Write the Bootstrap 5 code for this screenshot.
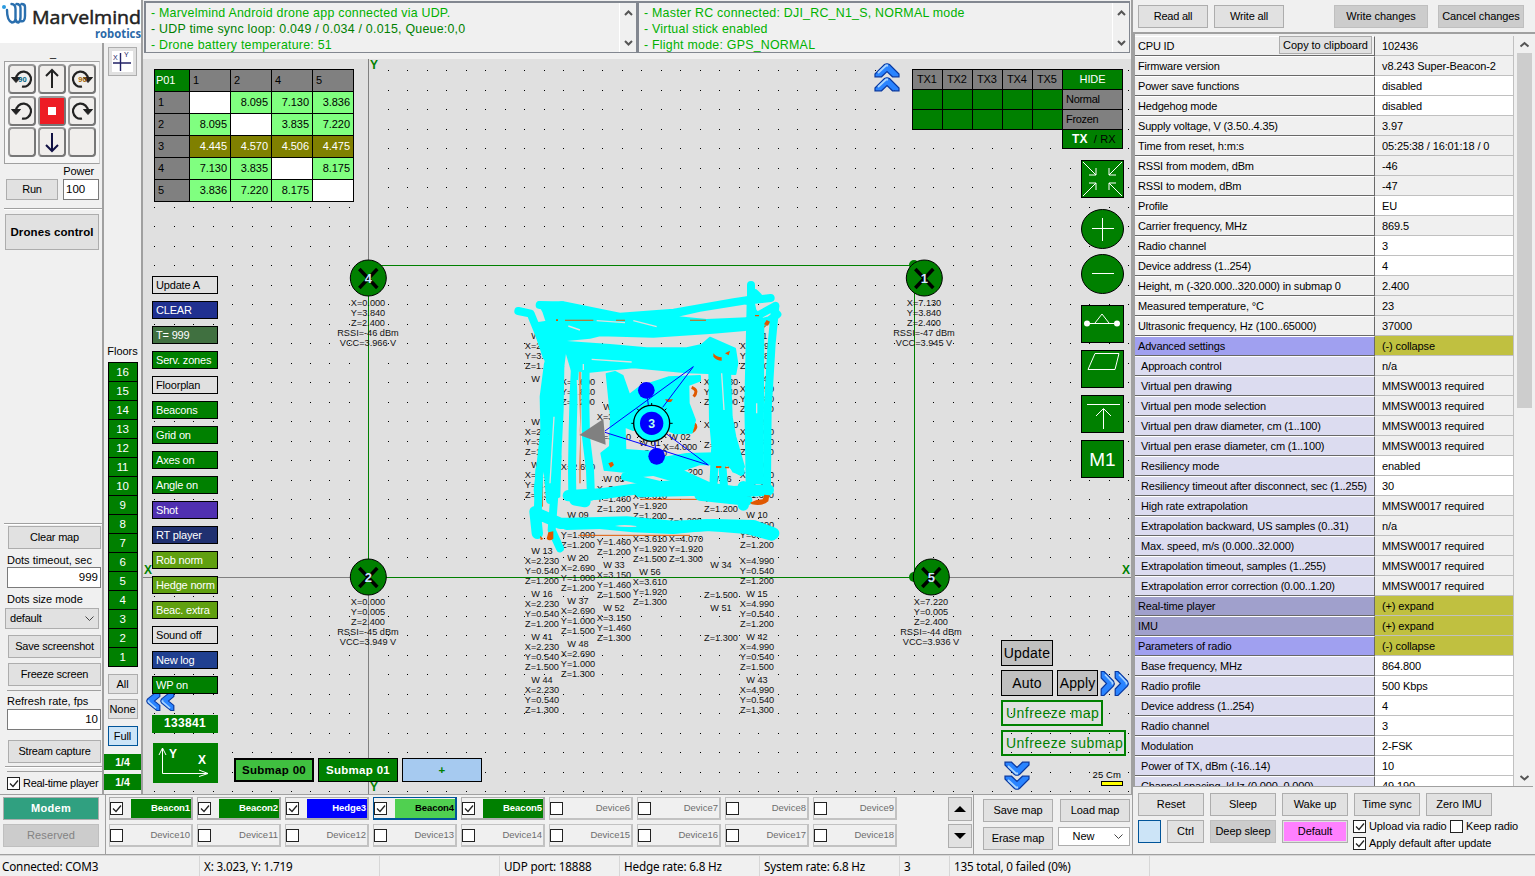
<!DOCTYPE html>
<html lang="en">
<head>
<meta charset="utf-8">
<title>Marvelmind Dashboard</title>
<link rel="stylesheet" href="https://cdn.jsdelivr.net/npm/bootstrap@5.3.0/dist/css/bootstrap.min.css">
<style>
:root{--face:#f0f0f0;--btn:#e1e1e1;--edge:#adadad;--split:#a0a0a0;--green:#008000}
body{font:11px/13px "Liberation Sans",Arial,sans-serif;color:#000;background:var(--face);width:1535px;height:876px;overflow:hidden;white-space:nowrap}
.wbtn{background:var(--btn);border:1px solid var(--edge);color:#000;font-size:11px;line-height:13px;padding:0;border-radius:0;display:flex;align-items:center;justify-content:center;letter-spacing:-.05px}
.panelA .wbtn{letter-spacing:-.22px}
.wbtn.dim{background:#ccc;border-color:#bfbfbf}
.h22{height:23px}
.field{background:#fff;border:1px solid #7a7a7a;height:21px;line-height:18px;font-size:11.5px;padding:0 2px}
.leftcol{width:143px;border-right:2px solid var(--split)}
.brand{height:43px;background:#fff}
.panelA{width:104px;border-right:2px solid var(--split)}
.pad9{width:96px;height:103px;border:1px solid var(--split);border-right-color:#ccc;padding:2px 3px;display:grid;grid-template-columns:repeat(3,28px);grid-template-rows:repeat(3,30px);gap:1.5px 2px;background:#f6f6f6}
.key{border:2px solid #777;border-top-color:#999;border-left-color:#999;border-radius:4px;background:#f0eeec}
.key svg{display:block;width:100%;height:100%}
.hr2{height:2px;background:var(--split);border-bottom:1px solid #fff}
.floors div{height:19px;background:var(--green);border:1px solid #000;border-bottom:0;color:#fff;font-size:11.5px;line-height:18px;text-align:center;letter-spacing:-.2px}
.floors{border-bottom:1px solid #000;width:30px}
.frac{height:16px;background:var(--green);color:#fff;font-weight:bold;text-align:center;line-height:16px;font-size:10.5px}
.log{height:52px;border:1px solid #828790;border-width:2px 1px 1px 2px;background:var(--face);font-size:12.4px;line-height:16px;color:#00b000;overflow:hidden;padding:1.5px 0 0 5px;letter-spacing:.24px;position:relative}
.log .bar{position:absolute;right:0;top:0;width:17px;height:49px;border-left:1px solid #fff}
.mapbox{height:735px;background:#e0e0e0;overflow:hidden}
.mapbox>svg{position:absolute;left:0;top:0}
.over{position:absolute}
.dist{border-collapse:collapse;table-layout:fixed;width:200px}
.dist td{border:1px solid #000;height:22px;padding:0 3px 2px 0;background:#80ff80;text-align:right;width:41px;line-height:16px;letter-spacing:-.05px}
.dist tr td:first-child{width:35px}
.dist td.hd{background:#808080;text-align:left;padding-left:3px}
.dist td.wh{background:#fff}.dist td.ol{background:#808000;color:#fff}
.dist td.p{background:var(--green);color:#fff;padding-left:1px}
.tool{width:66px;height:18px;border:1px solid #000;line-height:16px;padding-left:3px;color:#fff;background:var(--green);letter-spacing:-.18px}
.tool.plain{background:#e0e0e0;color:#000}
.tools{display:grid;gap:7px}
.tx{display:grid;grid-template-columns:repeat(5,30px) 60px;border-left:1px solid #000;border-top:1px solid #000}
.tx div{height:20px;border-right:1px solid #000;border-bottom:1px solid #000;background:var(--green);line-height:19px;padding-left:4px;letter-spacing:-.1px}
.tx .g{background:#808080}
.sq{width:43px;height:38px;display:block;background:var(--green);border:1px solid #000}
.cbtn{background:#c0c0c0;border:1px solid #000;height:26px;font-size:14px;line-height:24px;text-align:center;letter-spacing:.2px}
.gbtn{border:2px solid var(--green);color:var(--green);height:26px;font-size:14px;line-height:22px;padding-left:3px;letter-spacing:.45px}
.sub{width:80px;height:24px;border:1px solid #000;background:var(--green);color:#fff;font-weight:bold;font-size:11.5px;text-align:center;line-height:22px;letter-spacing:.3px}
.dev{width:84px;height:23px;border:1px solid #c2c2c2;border-right-width:2px;border-bottom-width:2px;background:var(--face);color:#6d6d6d;display:flex;align-items:center;font-size:9.5px}
.dev .nm{flex:1;text-align:right;height:19px;line-height:18px;padding-right:1px;letter-spacing:0}
.dev.on{border-color:var(--edge)}
.dev.on .nm{font-weight:bold;color:#fff;font-size:9.5px;letter-spacing:-.1px}
.cb{width:13px;height:13px;border:1px solid #222;background:#fff;flex:none;display:block}
.devs{display:grid;grid-template-columns:repeat(9,84px);gap:4px}
.status{height:21px;border-top:1px solid #d7d7d7;font:11.7px/20px "Noto Sans","Open Sans",sans-serif;letter-spacing:-.18px}
.status div{border-right:1px solid #d7d7d7;padding-left:4px;height:21px}
.props{height:750px;overflow:hidden;background:#fff;flex:none}
.pr{display:flex;height:20px}
.pr .k{width:240px;border-right:1px solid #696969;border-bottom:1px solid #696969;border-top:1px solid #fff;background:var(--face);padding-left:3px;line-height:18px;letter-spacing:-.17px}
.pr .v{width:139px;border-bottom:1px solid #c0c0c0;border-right:1px solid #c0c0c0;padding-left:7px;line-height:20px;letter-spacing:-.12px}
.sbar{width:16px;background:#f0f0f0;margin-left:3px}
svg text{font-family:"Liberation Sans",Arial,sans-serif}
</style>
</head>
<body>
<div class="d-flex" style="height:855px">
 <div class="d-flex flex-column" style="width:1132px">
  <div class="d-flex" style="height:794px">
   <div class="leftcol d-flex flex-column">
    <div class="brand"><svg width="141" height="43">
      <g fill="none" stroke="#2a6fae" stroke-width="2.400" stroke-linecap="round"><path d="M7 10Q7 21 12 22.500Q15.500 22.500 15.500 18V9Q15.500 4 11.500 4M15.500 19Q16 22.500 18.500 22.500Q20.500 21 20.500 17V8Q20.500 4 16.500 4M20.500 21Q25 22.500 25 16V7Q25 4 21.500 4"/></g><circle cx="4" cy="7" r="2" fill="#2b9be0"/>
      <text x="32" y="24" font-size="19" textLength="109" lengthAdjust="spacingAndGlyphs" stroke="#222" stroke-width=".5" fill="#222" style="font-family:'Open Sans'">Marvelmind</text>
      <text x="95" y="37.500" font-size="12.500" textLength="46" lengthAdjust="spacingAndGlyphs" font-weight="bold" fill="#2a69a8" style="font-family:'Open Sans'">robotics</text></svg></div>
    <div class="d-flex flex-fill">
     <div class="panelA ps-1 d-flex flex-column">
      <div class="text-center" style="height:18px;line-height:20px">_</div>
      <div class="pad9" id="pad"></div>
      <div class="text-end pe-2" style="height:15px;line-height:15px;letter-spacing:-.1px">Power</div>
      <div class="d-flex justify-content-between ps-1 pe-1"><div class="wbtn" style="width:52px;height:21px;margin-left:-2px">Run</div><div class="field" style="width:36px;margin-right:-1px">100</div></div>
      <div class="hr2 mt-2 ms-n1"></div>
      <div class="wbtn fw-bold mt-1" style="width:94px;height:36px;margin-left:1px;font-size:11.500px;letter-spacing:.1px">Drones control</div>
      <div class="flex-fill"></div>
      <div class="hr2"></div>
      <div class="d-flex flex-column" style="padding:1px 1px 0 4px;height:246px">
       <div class="wbtn h22">Clear map</div>
       <div style="margin-top:5px;margin-left:-1px">Dots timeout, sec</div>
       <div class="field text-end" style="margin-left:-1px">999</div>
       <div style="margin-top:5px;margin-left:-1px">Dots size mode</div>
       <div class="wbtn d-flex justify-content-between px-1" style="height:21px;width:94px;margin:2px 0 6px -3px"><span>default</span><svg width="9" height="6"><path d="M.5 .5l4 4 4-4" fill="none" stroke="#444"/></svg></div>
       <div class="wbtn h22">Save screenshot</div>
       <div class="wbtn h22" style="margin-top:5px">Freeze screen</div>
       <div style="margin-top:4px;margin-left:-1px;border-top:1px solid #a0a0a0;padding-top:4px">Refresh rate, fps</div>
       <div class="field text-end" style="margin-top:1px;margin-left:-1px">10</div>
       <div class="wbtn h22" style="margin-top:10px">Stream capture</div>
       <div class="hr2" style="margin:3px -1px 0 -3px"></div>
      </div>
      <div class="d-flex align-items-center" style="height:23px;margin-left:3px;border-top:1px solid #a0a0a0"><svg class="cb"><path d="M2 5.500l3 3 5-6" fill="none" stroke="#222" stroke-width="1.300"/></svg><span style="margin-left:3px;letter-spacing:-.3px">Real-time player</span></div>
     </div>
     <div class="flex-fill d-flex flex-column align-items-center">
      <div class="wbtn" style="width:29px;height:29px;margin-top:4px"><svg width="21" height="21"><rect width="21" height="21" fill="#fff"/><path d="M1 12h18M8.500 2v18" stroke="#226" stroke-width="1.400"/><text x="1" y="9" font-size="7" fill="#226">X</text><text x="12" y="6" font-size="7" fill="#226">Y</text></svg></div>
      <div class="flex-fill"></div>
      <div style="height:17px">Floors</div>
      <div class="floors" id="floors"></div>
      <div class="wbtn" style="width:30px;height:20px;margin-top:7px">All</div>
      <div class="wbtn" style="width:30px;height:20px;margin-top:5px">None</div>
      <div class="wbtn" style="width:30px;height:20px;margin-top:7px;background:#cce4f7;border-color:#005499">Full</div>
      <div class="frac w-100" style="margin-top:8px">1/4</div>
      <div class="frac w-100" style="margin:4px 0 4px">1/4</div>
     </div>
    </div>
   </div>
   <div style="width:989px;border-right:1px solid #a0a0a0">
    <div class="d-flex" style="height:59px;padding:1px 1px 0 1px">
     <div class="log" style="width:493px">- Marvelmind Android drone app connected via UDP.<br><span style="color:#008000">- UDP time sync loop: 0.049 / 0.034 / 0.015, Queue:0,0</span><br>- Drone battery temperature: 51<div class="bar"><svg width="16" height="49" fill="none" stroke="#555" stroke-width="2"><path d="M5 12l3.500-3.500L12 12M5 38l3.500 3.500L12 38"/></svg></div></div>
     <div class="log" style="width:493px">- Master RC connected: DJI_RC_N1_S, NORMAL mode<br>- Virtual stick enabled<br>- Flight mode: GPS_NORMAL<div class="bar"><svg width="16" height="49" fill="none" stroke="#555" stroke-width="2"><path d="M5 12l3.500-3.500L12 12M5 38l3.500 3.500L12 38"/></svg></div></div>
    </div>
    <div class="mapbox position-relative">
     <svg width="989" height="735" viewBox="143 59 989 735" id="map">
      <g id="dots" shape-rendering="crispEdges"></g>
      <g shape-rendering="crispEdges" fill="none"><path d="M368.500 59V794M143 577.500H1132" stroke="#808080"/><path d="M368.500 278V577.500H914.500V265.500H368" stroke="#008000"/></g>
      <g fill="#008000"><circle cx="914" cy="265" r="5"/><circle cx="914" cy="577" r="5"/></g>
      <g id="labels" font-size="9.200" text-anchor="middle" fill="#111"></g>
      <g transform="translate(500 270) scale(.33333)" id="paint">
       <g fill="#e05800"><path d="M113 155l20 8v40z"/></g>
       <g fill="none" stroke="#e05800" stroke-width="3"><path d="M772 195V390M127 590V710M420 688H690M235 796H570M240 285V640M650 505V640"/><path stroke-width="9" d="M575 352q22 8 6 28M583 462q12 10-8 24M790 170l12-12"/></g>
       <g fill="#0ff" stroke="#0ff" stroke-width="6" stroke-linejoin="round">
        <path d="M115 97L190 97L360 131L520 119L700 88L740 82V100L600 122L520 140L620 150L740 145L735 180L640 188L460 200L300 196L270 203L200 210L190 290H138L130 200L110 160L140 155L130 125z"/>
        <path d="M135 280L190 290L188 420L182 540L178 680L150 690L148 440L130 600L108 690L104 660L124 480L122 380z"/>
        <path d="M190 215L330 225L440 235L560 235L605 225L630 203L705 236L712 280L706 312L560 307L400 292L270 305L215 300z"/>
        <path d="M320 312L345 306L368 318L388 375L420 350L505 322L600 318L600 332L565 345L566 400L585 450L575 488L525 490L470 465L400 480L374 470L376 540L372 600L314 600L304 550L330 530L333 440z"/>
        <path d="M628 300H690L695 440L706 500L732 590L720 612L700 605L676 560L640 562L630 450z"/>
        <path d="M376 540L450 545L500 562L560 552L700 548L726 575L690 585L600 582L545 602L400 608L320 600z"/>
        <path d="M743 100H762L766 120L790 150L788 640H740L736 400z"/>
       </g>
       <g fill="none" stroke="#0ff" stroke-linecap="round" stroke-linejoin="round">
        <g stroke-width="24">
        <path d="M55 123L92 131L118 195L140 260M119 105L200 112M740 92L812 84M740 155L826 108M740 170L810 150L832 133M753 45V640M765 70L775 80M826 108L815 220L803 420L801 640M185 106V200"/>
        <path d="M118 600L114 710L110 790M172 560L162 690L155 780L180 835M135 500L150 690"/>
        <path d="M225 290L221 370L218 480L216 600L217 680M257 285L256 400L258 500L270 600L273 680"/>
        <path d="M395 612L520 600L630 650M440 600L580 640M645 540L640 650M665 560L672 650M690 580L722 605M375 620L500 650"/></g>
        <g stroke-width="34"><path d="M205 677L300 672L420 655L560 645L700 665L805 660M225 690L255 695M420 665L600 660M600 675L740 690M730 650V705M105 725L112 790M110 730L180 760L300 760L400 770L520 775L620 765L740 775L815 795"/><path stroke-width="36" d="M200 762L380 757L520 770L640 765L760 768L820 790"/></g>
       </g>
       <g fill="none" stroke="#e0e0e0" stroke-width="4"><path d="M290 152L375 158M400 152L470 170M250 282V300M162 440L150 640M232 330L240 480L232 640M275 268L395 276M665 310L672 420M770 400V430M240 180L205 168"/></g>
       <g fill="#e05800"><path d="M640 250q10 12 25 12v10q-15 0-25-12zM675 250l15-8-4 14zM800 150l10 5-6 12-12-4zM325 580l12-5 5 10-10 8zM195 149.500h85v3h-85zM348 149.500h27v3h-27zM570 149.500h48v3h-48zM750 698q20-10 38-10l5-14 15 2-3 18q-15 15-50 9zM145 787l15-3v22q-12 10-20 0zM120 797l10 10-8 3zM765 135h12v4h-12zM495 388h24l-6 8h-12zM648 588h16v6h-16zM675 590h12v5h-12zM168 148h6v5h-6z"/></g>
       <path d="M345 768q25-6 64 0v2q-40 2-64-2z" fill="#ddd"/>
       <path d="M238 495L310 447L317 524z" fill="#808080"/>
       <g fill="none" stroke="#00f" stroke-width="3"><path d="M580 290L315 483M580 290L488 412M315 487L625 585M500 492L625 585M439 361L445 405M470 559L464 515"/></g>
       <path d="M455 399v13M455 508v13M394 460h12M504 460h14M411 416l9 9M499 416l-9 9M411 504l9-9M499 504l-9-9" stroke="#000" stroke-width="3"/>
       <circle cx="455" cy="460" r="54" fill="#0ff" stroke="#000" stroke-width="4"/>
       <g fill="#00f"><circle cx="455" cy="460" r="35"/><circle cx="439" cy="361" r="25"/><circle cx="470" cy="559" r="25"/></g>
       <text x="455" y="473" font-size="37" font-weight="bold" text-anchor="middle" fill="#bfe">3</text>
      </g>
      <g id="nodes"></g>
      <g font-size="12" font-weight="bold" fill="#008000"><text x="370" y="69">Y</text><text x="370" y="791">Y</text><text x="144" y="574">X</text><text x="1122" y="574">X</text></g>
      <defs><g id="chev"><path d="M-12 3.500L-2.500-6Q0-7.500 2.500-6L12 3.500V6.300H5.500L0 1L-5.500 6.300H-12z" fill="#2a84ff" stroke="#0838a0" stroke-width="1.200"/><path d="M-9 2.500L-1-5L1-5" stroke="#a8d4ff" stroke-width="1.800" fill="none"/></g></defs>
      <g><use href="#chev" x="887" y="70.500"/><use href="#chev" x="887" y="84.500"/>
      <use href="#chev" transform="translate(1017 768.500) scale(1 -1)"/><use href="#chev" transform="translate(1017 782.500) scale(1 -1)"/>
      <use href="#chev" transform="translate(1107.500 683.500) rotate(90)"/><use href="#chev" transform="translate(1121.500 683.500) rotate(90)"/>
      <use href="#chev" transform="translate(153.500 701) rotate(-90) scale(.8 1)"/><use href="#chev" transform="translate(167.500 701) rotate(-90) scale(.8 1)"/></g>
      <text x="1092.500" y="778" font-size="9.500" letter-spacing=".1">25 Cm</text><rect x="1101.500" y="781.500" width="21" height="4" fill="#ff0" stroke="#000"/>
     </svg>
     <table class="dist over" style="left:11px;top:10px" id="dist"></table>
     <div class="tools over" style="left:9px;top:217px" id="tools"></div>
     <div class="over text-white fw-bold text-center" style="left:9px;top:656px;width:66px;height:18px;background:#008000;font:bold 12px/17px 'Liberation Sans';letter-spacing:.3px">133841</div>
     <svg class="over" style="left:10px;top:684px" width="65" height="40"><rect width="65" height="40" fill="#008000"/><path d="M9.500 5V30.500H55M6 12l3.500-7L13 12M46 27l9 3.500-9 3" fill="none" stroke="#fff"/><g fill="#fff" font-weight="bold" font-size="12"><text x="16" y="15">Y</text><text x="45" y="21">X</text></g></svg>
     <div class="over d-flex gap-1" style="left:91px;top:699px"><div class="sub" style="background:#40c040;color:#000;border-width:2px;line-height:21px">Submap 00</div><div class="sub">Submap 01</div><div class="sub" style="background:#a6caf0;color:#008000">+</div></div>
     <div class="tx over" style="left:769px;top:10px"><div class="g">TX1</div><div class="g">TX2</div><div class="g">TX3</div><div class="g">TX4</div><div class="g">TX5</div><div class="text-white text-center p-0">HIDE</div>
      <div></div><div></div><div></div><div></div><div></div><div class="g" style="padding-left:3px;letter-spacing:-.3px">Normal</div><div></div><div></div><div></div><div></div><div></div><div class="g" style="padding-left:3px;letter-spacing:-.3px">Frozen</div></div>
     <div class="over" style="left:919px;top:70px;width:61px;height:20px;background:#008000;border:1px solid #000;padding-left:9px;line-height:18px;letter-spacing:.1px"><b class="text-white" style="font-size:12px">TX</b>&nbsp; / RX</div>
     <div class="over d-grid" style="left:938px;top:101px;row-gap:7px">
      <svg class="sq" style="margin-bottom:5px"><g fill="none" stroke="#fff"><path d="M1 1L14 14M14 7V14H7M40 1L27 14M27 7V14H34M1 35L14 22M7 22H14V29M40 35L27 22M34 22H27V29"/></g></svg>
      <svg class="d-block overflow-visible" width="43" height="38" viewBox="0 0 43 38"><ellipse cx="21.500" cy="19" rx="21" ry="19.500" fill="#008000" stroke="#000"/><path d="M11 18.500H33M21.500 8V31" stroke="#fff"/></svg>
      <svg class="d-block overflow-visible" width="43" height="38" viewBox="0 0 43 38"><ellipse cx="21.500" cy="19" rx="21" ry="19.500" fill="#008000" stroke="#000"/><path d="M11 18.500H33" stroke="#fff"/></svg>
      <svg class="sq" style="margin-top:5px"><path d="M5 17.500H35M13 17L20 8L27 17" fill="none" stroke="#fff"/><circle cx="5" cy="17.500" r="3" fill="#fff"/><circle cx="35" cy="17.500" r="3" fill="#fff"/></svg>
      <svg class="sq"><path d="M13 2.500H37L33 18.500H6z" fill="none" stroke="#fff"/></svg>
      <svg class="sq"><path d="M5 8.500H38M21.500 33V13M14 20l7.500-7.500L29 20" fill="none" stroke="#fff"/></svg>
      <svg class="sq"><text x="20.500" y="25" font-size="19" fill="#fff" text-anchor="middle">M1</text></svg>
     </div>
     <div class="over d-grid gap-1" style="left:858px;top:581px">
      <div class="cbtn" style="width:52px">Update</div>
      <div class="d-flex gap-1"><div class="cbtn" style="width:52px">Auto</div><div class="cbtn" style="width:41px;letter-spacing:.1px">Apply</div></div>
      <div class="gbtn" style="width:102px">Unfreeze map</div><div class="gbtn" style="width:125px">Unfreeze submap</div>
     </div>
    </div>
   </div>
  </div>
  <div class="d-flex" style="height:61px;border-top:1px solid #a0a0a0;border-bottom:1px solid #a0a0a0">
   <div class="d-flex flex-column" style="width:106px;padding:2px 0 0 3px;border-right:1px solid #a0a0a0;gap:4px"><div class="wbtn fw-bold" style="width:96px;height:23px;background:#30a080;color:#fff;letter-spacing:.3px">Modem</div><div class="wbtn dim" style="width:96px;height:23px;color:#838383;letter-spacing:.1px">Reserved</div></div>
   <div class="devs" style="padding:2px 0 0 3px;width:833px;align-content:start" id="devs"></div>
   <div class="d-grid" style="width:35px;gap:3px;padding:2px 0 0 9px;margin-right:6px;border-right:1px solid #a0a0a0;align-content:start"><div class="wbtn" style="height:24px;width:24px"><svg width="12" height="7"><path d="M0 6L6 0L12 6z"/></svg></div><div class="wbtn" style="height:24px;width:24px"><svg width="12" height="7"><path d="M0 0L6 6L12 0z"/></svg></div></div>
   <div style="display:grid;grid-template-columns:70px 70px;gap:5px 7px;padding:4px 0 0 3px;align-content:start"><div class="wbtn h22">Save map</div><div class="wbtn h22">Load map</div><div class="wbtn h22">Erase map</div><div class="wbtn" style="background:#fff;height:19px;margin-left:-2px;gap:20px;padding-left:8px"><span>New</span><svg width="9" height="6"><path d="M.5 .5l4 4 4-4" fill="none" stroke="#444"/></svg></div></div>
  </div>
 </div>
 <div style="width:403px;border-left:1px solid #a0a0a0;border-bottom:1px solid #a0a0a0">
  <div class="d-flex" style="height:34px;padding:5px 0 0 5px;border-bottom:2px solid #a0a0a0"><div class="wbtn h22" style="width:70px;letter-spacing:-.25px">Read all</div><div class="wbtn h22" style="width:70px;margin-left:6px;letter-spacing:-.15px">Write all</div><div class="wbtn h22 dim" style="width:94px;margin-left:50px">Write changes</div><div class="wbtn h22 dim" style="width:86px;margin-left:10px;letter-spacing:-.1px">Cancel changes</div></div>
  <div class="d-flex" style="height:753px;border-left:2px solid #a0a0a0;border-bottom:1px solid #a0a0a0;padding-top:2px;margin-right:2px">
   <div class="props position-relative" id="props"></div>
   <div class="sbar"><svg width="15" height="750" class="d-block"><path d="M0 17H15V372H0z" fill="#cdcdcd"/><path d="M3.500 10.500L7.500 7L11.500 10.500M3.500 740L7.500 743.500L11.500 740" stroke="#555" stroke-width="2" fill="none"/></svg></div>
  </div>
  <div style="padding:6px 0 0 5px;height:66px">
   <div class="d-flex" style="gap:6px"><div class="wbtn h22" style="width:66px">Reset</div><div class="wbtn h22" style="width:66px">Sleep</div><div class="wbtn h22" style="width:66px">Wake up</div><div class="wbtn h22" style="width:66px">Time sync</div><div class="wbtn h22" style="width:66px">Zero IMU</div></div>
   <div class="d-flex" style="gap:6px;margin-top:4px"><div class="wbtn h22" style="width:23px;background:#cce4f7;border-color:#005499"></div><div class="wbtn h22" style="width:37px">Ctrl</div><div class="wbtn h22 dim" style="width:66px">Deep sleep</div><div class="wbtn h22" style="width:66px;background:#ff80ff;box-shadow:inset 0 0 0 1px #e1e1e1">Default</div>
    <div style="margin-left:-1px;letter-spacing:-.12px"><div class="d-flex" style="height:17px;gap:3px"><svg class="cb"><path d="M2 5.500l3 3 5-6" fill="none" stroke="#222" stroke-width="1.300"/></svg><span style="width:78px">Upload via radio</span><span class="cb"></span>Keep radio</div><div class="d-flex" style="gap:3px"><svg class="cb"><path d="M2 5.500l3 3 5-6" fill="none" stroke="#222" stroke-width="1.300"/></svg>Apply default after update</div></div></div>
  </div>
 </div>
</div>
<div class="status d-flex"><div style="width:200px;padding-left:2px">Connected: COM3</div><div style="width:180px">X: 3.023, Y: 1.719</div><div style="width:120px"></div><div style="width:120px">UDP port: 18888</div><div style="width:140px">Hedge rate: 6.8 Hz</div><div style="width:140px">System rate: 6.8 Hz</div><div style="width:50px">3</div><div style="width:200px">135 total, 0 failed (0%)</div></div>
<script src="https://cdn.jsdelivr.net/npm/bootstrap@5.3.0/dist/js/bootstrap.bundle.min.js"></script>
<script>
const $=id=>document.getElementById(id);
// movement pad
const turn=(t,flip)=>`<svg viewBox="0 0 24 26"><g ${flip?'transform="translate(24 0) scale(-1 1)"':''} fill="none" stroke="#222" stroke-width="2.200"><path d="M6 13a7.500 7.500 0 1 1 6 7.500"/><path d="M1.500 11.500l4.500 5 4.500-5z" fill="#222" stroke-width="1"/></g>${t?`<text x="12.500" y="16" font-size="7.500" font-weight="bold" text-anchor="middle" fill="${flip?'#a60':'#068'}">90</text>`:''}</svg>`;
const arr=(d,c)=>`<svg viewBox="0 0 24 26"><path d="${d}" fill="none" stroke="${c}" stroke-width="2"/></svg>`;
$('pad').innerHTML=[turn(1,0),arr('M12 22V4M6 10l6-6 6 6','#222'),turn(1,1),turn(0,0),'<svg viewBox="0 0 24 26"><path d="M0 0H24V26H0z" fill="#ed1c24"/><path d="M8 9h8v8H8z" fill="#fff"/></svg>',turn(0,1),'',arr('M12 4V22M6 16l6 6 6-6','#114'),''].map(s=>`<div class="key">${s}</div>`).join('');
let h='';for(let i=16;i;i--)h+=`<div>${i}</div>`;$('floors').innerHTML=h;
// grid of map points
const ys=[70,90,109,129,148,168,187,207,226,246,265,285,304,324,343,363,382,402,421,441,460,480,499,518,538,557,577,596,616,635,655,674,694,713,733,752,772,791];
const xs=[154,174,193,213,232,252,271,291,310,329,349,368,388,407,427,446,466,485,505,524,544,563,583,602,622,641,661,680,700,719,739,758,778,797,816,836,855,875,894,914,933,953,972,992,1011,1031,1050,1070,1089,1109,1128];
let d='';ys.forEach(y=>xs.forEach(x=>d+=`M${x} ${y}h1v1h-1z`));$('dots').innerHTML=`<path d="${d}"/>`;
// waypoint captions: centre x, centre y of first line, lines
const W=(n,x,y,z)=>['W '+n,'X='+x,'Y='+y,'Z='+z];
const L=[[542,335.500,W('12','2.230','3.300','1.200')],[542,378.500,['W 17']],[542,421.700,W('08','2.230','3.300','1.500')],[542,464.700,W('25','2.230','3.300','1.300')],[542,550.700,W('13','2.230','0.540','1.200')],[542,593.700,W('16','2.230','0.540','1.200')],[542,636.700,W('41','2.230','0.540','1.500')],[542,679.700,W('44','2.230','0.540','1.300')],
[578,372,['','X=2.690','Y=2.840','Z=1.200']],[578,457,['','X=2.690']],[578,514.700,W('09','2.690','1.000','1.200')],[578,557.700,W('20','2.690','1.000','1.200')],[578,600.700,W('37','2.690','1.000','1.500')],[578,643.700,W('48','2.690','1.000','1.300')],
[614,406.500,['W 04','X=3.150']],[614,478.500,W('05','3.150','1.460','1.200')],[614,521.700,['','','Y=1.460','Z=1.200']],[614,564.700,W('33','3.150','1.460','1.500')],[614,607.700,W('52','3.150','1.460','1.300')],
[614,437,['X=3.610']],[650,443,W('01','3.610','1.920','1.200')],[650,486,['','X=3.610','Y=1.920','Z=1.200']],[650,529,['','X=3.610','Y=1.920','Z=1.500']],[650,571.700,W('56','3.610','1.920','1.300')],
[680,437,['W 02','X=4.000']],[686,472,['Z=1.200']],[685,521,['Z=1.200']],[686,529,['','X=4.070','Y=1.920','Z=1.300']],
[721,372,['','X=4.530','Y=2.840','Z=1.200']],[721,415,['','X=4.530','','Z=1.500']],[721,478.500,['W 06','','Y=1.460','Z=1.200']],[721,565,['W 34','','','Z=1.500']],[721,608,['W 51','','','Z=1.300']],
[757,335.500,W('11','4.990','3.380','1.200')],[757,378.500,W('14','4.990','3.380','1.200')],[757,421.700,W('39','4.990','3.380','1.500')],[757,464.700,W('46','4.990','3.380','1.300')],[757,514.700,W('10','4.990','0.540','1.200')],[757,550.700,['','X=4.990','Y=0.540','Z=1.200']],[757,593.700,W('15','4.990','0.540','1.200')],[757,636.700,W('42','4.990','0.540','1.500')],[757,679.700,W('43','4.990','0.540','1.300')]];
const B=[[368,278,4,'0.000','3.840','46','3.966'],[924,278,1,'7.130','3.840','47','3.945'],[368,577,2,'0.000','0.005','45','3.949'],[931,577,5,'7.220','0.005','44','3.936']];
B.forEach(b=>L.push([b[0],b[1]+25,['X='+b[3],'Y='+b[4],'Z=2.400',`RSSI=-${b[5]} dBm`,`VCC=${b[6]} V`]]));
$('labels').innerHTML=L.map(([x,y,t])=>t.map((s,i)=>s?`<text x="${x}" y="${y+3.3+i*10}">${s}</text>`:'').join('')).join('');
$('nodes').innerHTML=B.map(b=>`<g transform="translate(${b[0]+.3} ${b[1]})"><circle r="18" fill="#008000" stroke="#000"/><path d="M-9-9L9 10M9-9L-9 10" stroke="#000" stroke-width="3.500"/><text y="5" font-size="13" font-weight="bold" text-anchor="middle" fill="#cfe8ff">${b[2]}</text></g>`).join('');
// distance table
const T=[['P01',1,2,4,5],[1,'','8.095','7.130','3.836'],[2,'8.095','','3.835','7.220'],[3,'4.445','4.570','4.506','4.475'],[4,'7.130','3.835','','8.175'],[5,'3.836','7.220','8.175','']];
$('dist').innerHTML=T.map((r,i)=>'<tr>'+r.map((c,j)=>`<td class="${!i&&!j?'p text-start':!i||!j?'hd':c===''?'wh':i==3?'ol':''}">${c}</td>`).join('')+'</tr>').join('');
$('tools').innerHTML=[['Update A'],['CLEAR','#203090'],['T= 999','#407040'],['Serv. zones','#008000'],['Floorplan'],['Beacons','#008000'],['Grid on','#008000'],['Axes on','#008000'],['Angle on','#008000'],['Shot','#5030b0'],['RT player','#203070'],['Rob norm','#60a010'],['Hedge norm','#60a010'],['Beac. extra','#60a010'],['Sound off'],['New log','#204090'],['WP on','#008000']].map(([t,c])=>`<div class="tool ${c?'':'plain'}" ${c?`style="background:${c}"`:''}>${t}</div>`).join('');
// devices
h='';const on={1:['Beacon1','#008000'],2:['Beacon2','#008000'],3:['Hedge3','#00f'],4:['Beacon4','#50d050'],5:['Beacon5','#008000']};
for(let i=1;i<19;i++){const o=on[i];h+=`<div class="dev ${o?'on':''}" ${i==4?'style="border-color:#005499"':''}><svg class="cb">${o?'<path d="M2 5.500l3 3 5-6" fill="none" stroke="#222" stroke-width="1.300"/>':''}</svg><div class="nm ms-2" ${o?`style="background:${o[1]};${i==4?'color:#000':''}"`:''}>${o?o[0]:'Device'+i}</div></div>`}
$('devs').innerHTML=h;
// properties: label, value, kind (g grey value, w white value)
const P=`CPU ID|102436|g
Firmware version|v8.243 Super-Beacon-2|g
Power save functions|disabled|w
Hedgehog mode|disabled|w
Supply voltage, V (3.50..4.35)|3.97|g
Time from reset, h:m:s|05:25:38 / 16:01:18 / 0|g
RSSI from modem, dBm|-46|g
RSSI to modem, dBm|-47|g
Profile|EU|w
Carrier frequency, MHz|869.5|g
Radio channel|3|w
Device address (1..254)|4|w
Height, m (-320.000..320.000) in submap 0|2.400|g
Measured temperature, °C|23|g
Ultrasonic frequency, Hz (100..65000)|37000|g
Advanced settings|(-) collapse|H
Approach control|n/a|sg
Virtual pen drawing|MMSW0013 required|sg
Virtual pen mode selection|MMSW0013 required|sg
Virtual pen draw diameter, cm (1..100)|MMSW0013 required|sg
Virtual pen erase diameter, cm (1..100)|MMSW0013 required|sg
Resiliency mode|enabled|sw
Resiliency timeout after disconnect, sec (1..255)|30|sw
High rate extrapolation|MMSW0017 required|sg
Extrapolation backward, US samples (0..31)|n/a|sg
Max. speed, m/s (0.000..32.000)|MMSW0017 required|sg
Extrapolation timeout, samples (1..255)|MMSW0017 required|sg
Extrapolation error correction (0.00..1.20)|MMSW0017 required|sg
Real-time player|(+) expand|D
IMU|(+) expand|D
Parameters of radio|(-) collapse|H
Base frequency, MHz|864.800|sw
Radio profile|500 Kbps|sw
Device address (1..254)|4|sw
Radio channel|3|sw
Modulation|2-FSK|sw
Power of TX, dBm (-16..14)|10|sw
Channel spacing, kHz (0.000..0.000)|49.190|sw`.split('\n').map(s=>s.split('|'));
$('props').innerHTML=P.map(([a,b,k])=>{const kb=k=='H'?'#a0a0f0':k=='D'?'#a0a0cc':k[0]=='s'?'#dcdcf0':'#f0f0f0',vb=/[HD]/.test(k)?'#c0c040':/g/.test(k)?'#f0f0f0':'#fff';return `<div class="pr"><div class="k" style="background:${kb};${k[0]=='s'?'padding-left:6px':''}">${a}</div><div class="v" style="background:${vb}">${b}</div></div>`}).join('')+'<div class="wbtn over" style="left:144px;top:0;width:93px;height:18px">Copy to clipboard</div>';
</script>
</body>
</html>
